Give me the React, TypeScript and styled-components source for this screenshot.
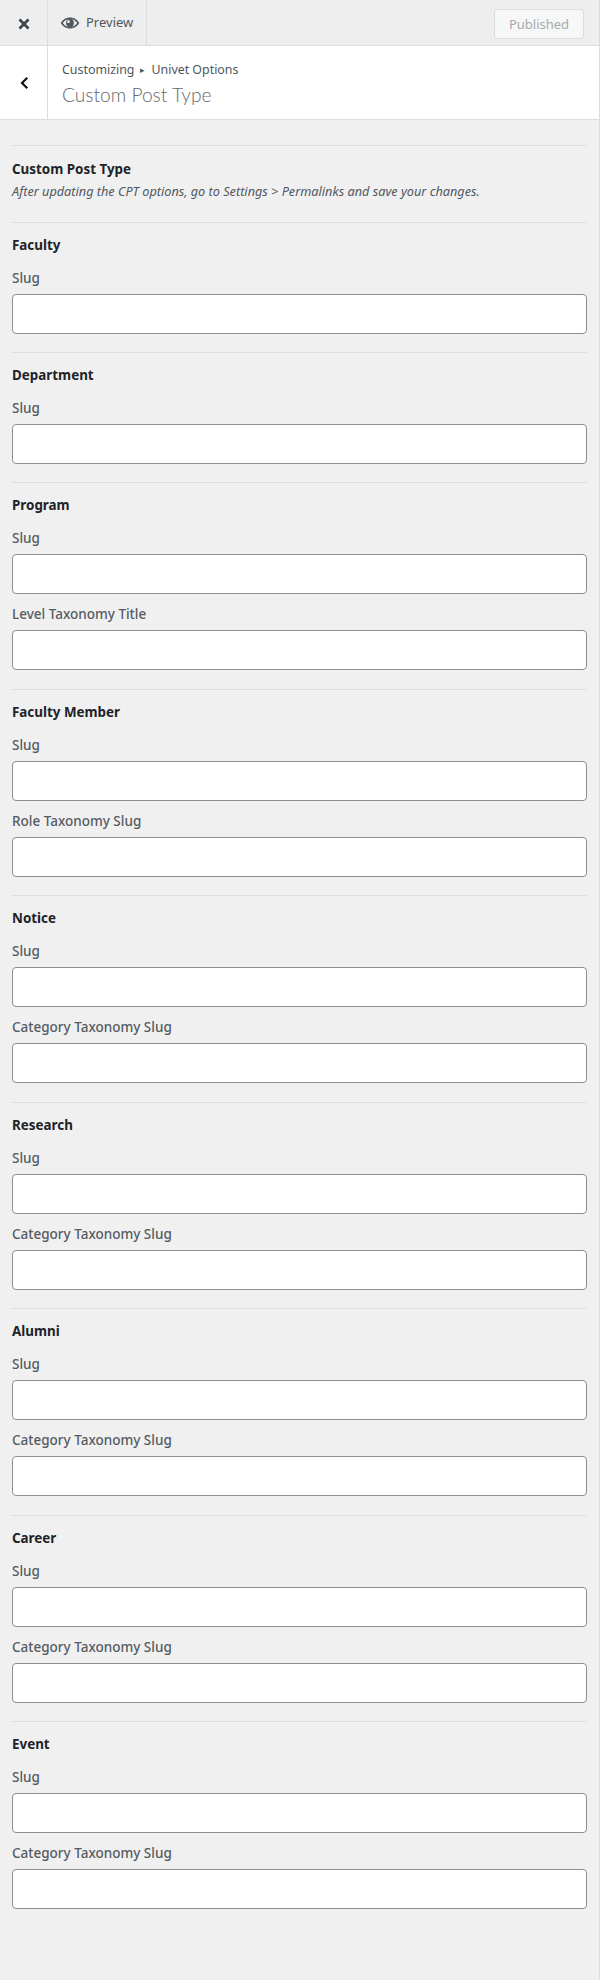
import styled, { createGlobalStyle } from "styled-components";

const GlobalStyle = createGlobalStyle`
    html, body {
        margin: 0;
        padding: 0;
        background: #f0f0f1;
    }

    * {
        box-sizing: border-box;
    }
`

const sections = [
    { title: "Faculty", fields: ["Slug"] },
    { title: "Department", fields: ["Slug"] },
    { title: "Program", fields: ["Slug", "Level Taxonomy Title"] },
    { title: "Faculty Member", fields: ["Slug", "Role Taxonomy Slug"] },
    { title: "Notice", fields: ["Slug", "Category Taxonomy Slug"] },
    { title: "Research", fields: ["Slug", "Category Taxonomy Slug"] },
    { title: "Alumni", fields: ["Slug", "Category Taxonomy Slug"] },
    { title: "Career", fields: ["Slug", "Category Taxonomy Slug"] },
    { title: "Event", fields: ["Slug", "Category Taxonomy Slug"] },
];

export default function App() {
    return (
        <Page>
            <GlobalStyle />
            <TopBar>
                <CloseCell>
                    <svg width="20" height="20" viewBox="0 0 20 20">
                        <path d="M5.500 5.500l9 9M14.500 5.500l-9 9" stroke="#3c434a" strokeWidth="2.800" fill="none" />
                    </svg>
                </CloseCell>
                <PreviewCell>
                    <svg width="20" height="20" viewBox="0 0 20 20">
                        <path
                            fill="#50575e"
                            fillRule="evenodd"
                            d="M10 4.500c4 0 7.400 2.200 9.200 5.500-1.800 3.300-5.200 5.500-9.200 5.500S2.600 13.300.8 10C2.600 6.700 6 4.500 10 4.500zM10 6C7.200 6 4.500 7.500 2.800 10c1.700 2.500 4.400 4 7.200 4s5.500-1.500 7.200-4C15.500 7.500 12.800 6 10 6zM10 6.100a3.900 3.900 0 110 7.800 3.900 3.900 0 010-7.800zM8.500 7.300a1.400 1.400 0 100 2.800 1.400 1.400 0 000-2.800z"
                        />
                    </svg>
                    <span>Preview</span>
                </PreviewCell>
                <PublishedButton>Published</PublishedButton>
            </TopBar>

            <SectionHead>
                <BackCell>
                    <svg width="20" height="20" viewBox="0 0 20 20">
                        <path d="M13.300 4.700L8 10l5.300 5.300" stroke="#101517" strokeWidth="2.200" fill="none" />
                    </svg>
                </BackCell>
                <HeadText>
                    <Crumbs>
                        Customizing<Arrow>▸</Arrow>Univet Options
                    </Crumbs>
                    <HeadTitle>Custom Post Type</HeadTitle>
                </HeadText>
            </SectionHead>

            <Panel>
                <IntroGroup>
                    <GroupTitle>Custom Post Type</GroupTitle>
                    <Description>After updating the CPT options, go to Settings &gt; Permalinks and save your changes.</Description>
                </IntroGroup>
                {sections.map((section) => (
                    <Group key={section.title}>
                        <GroupTitle>{section.title}</GroupTitle>
                        {section.fields.map((field) => (
                            <Field key={field}>
                                <FieldLabel>{field}</FieldLabel>
                                <TextInput type="text" />
                            </Field>
                        ))}
                    </Group>
                ))}
            </Panel>
        </Page>
    )
}

const Page = styled.main`
    width: 600px;
    min-height: 1980px;
    background: #f0f0f1;
    border-right: 1px solid #dcdcde;
    font-family: "Noto Sans", "Open Sans", sans-serif;
    font-size: 13px;
    color: #50575e;
`

const TopBar = styled.header`
    display: flex;
    align-items: stretch;
    height: 46px;
    background: #eeeeee;
    border-bottom: 1px solid #dddddd;
`

const CloseCell = styled.div`
    display: flex;
    align-items: center;
    justify-content: center;
    width: 48px;
    padding: 3px 0 0 1px;
    border-right: 1px solid #dddddd;
`

const PreviewCell = styled.div`
    display: flex;
    align-items: center;
    gap: 6px;
    width: 99px;
    padding-left: 12px;
    border-right: 1px solid #dddddd;
    font-size: 13px;

    & span {
        margin-top: -1px;
    }
`

const PublishedButton = styled.div`
    margin: 9px 15px 6px auto;
    width: 90px;
    height: 30px;
    display: flex;
    align-items: center;
    justify-content: center;
    background: #f6f7f7;
    border: 1px solid #dcdcde;
    border-radius: 3px;
    color: #a7aaad;
    font-size: 13px;
`

const SectionHead = styled.section`
    display: flex;
    height: 74px;
    background: #ffffff;
    border-bottom: 1px solid #dddddd;
`

const BackCell = styled.div`
    display: flex;
    align-items: center;
    justify-content: center;
    width: 48px;
    border-right: 1px solid #dddddd;
`

const HeadText = styled.div`
    display: flex;
    flex-direction: column;
    padding: 14px 0 0 14px;
`

const Crumbs = styled.div`
    font-size: 12.4px;
    line-height: 20px;
    color: #50575e;
`

const Arrow = styled.span`
    font-size: 9px;
    margin: 0 6px;
    vertical-align: 1px;
`

const HeadTitle = styled.h1`
    margin: 2px 0 0;
    font-family: Lato, "Noto Sans", sans-serif;
    font-size: 19.2px;
    font-weight: 300;
    line-height: 26px;
    color: #646970;
`

const Panel = styled.div`
    padding: 25px 12px 0;
`

const Group = styled.div`
    border-top: 1px solid #dddddd;
    padding: 11px 0 18px;
`

const IntroGroup = styled(Group)`
    padding: 12px 0 21px;
`

const GroupTitle = styled.h3`
    margin: 0;
    font-size: 13.4px;
    font-weight: 700;
    line-height: 22px;
    color: #1d2327;
`

const Description = styled.p`
    margin: 1px 0 0;
    font-size: 12.7px;
    font-style: italic;
    line-height: 20px;
    color: #50575e;
`

const Field = styled.div`
    margin-top: 12px;

    & + & {
        margin-top: 10px;
        margin-bottom: 0.5px;
    }
`

const FieldLabel = styled.label`
    display: block;
    font-size: 13.5px;
    font-weight: 500;
    line-height: 20px;
    margin-bottom: 6px;
    color: #555b62;
`

const TextInput = styled.input`
    display: block;
    width: 100%;
    height: 40px;
    background: #ffffff;
    border: 1px solid #8c8f94;
    border-radius: 4px;
`
